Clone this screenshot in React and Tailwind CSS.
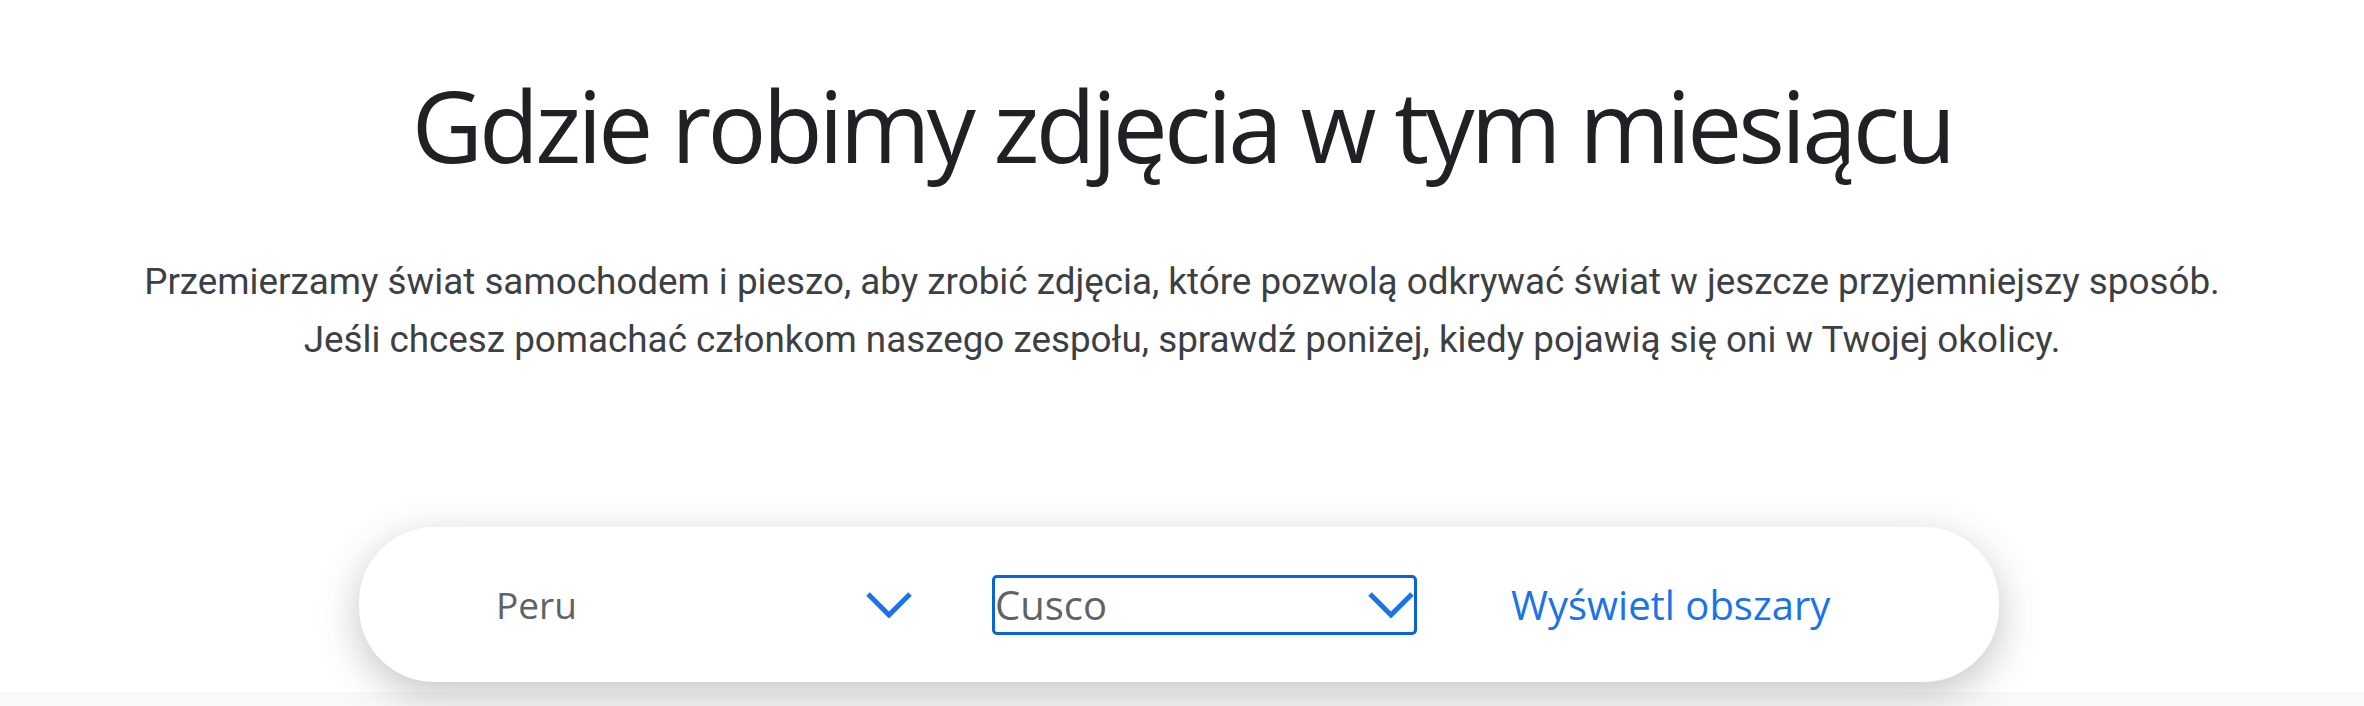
import React from 'react';

function Chevron() {
  return (
    <svg width="46" height="26" viewBox="0 0 46 26" fill="none" className="shrink-0">
      <path d="M2 2 L23 23 L44 2" stroke="#1a73e8" strokeWidth="5" />
    </svg>
  );
}

export default function App() {
  return (
    <div className="min-h-screen bg-white flex flex-col">
      <div className="flex flex-col items-center h-[692px]">
        <h1 className="pt-[76px] text-[98px] leading-none tracking-[-3.8px] font-normal text-[#202124] font-['Open_Sans',sans-serif]">
          Gdzie robimy zdjęcia w tym miesiącu
        </h1>
        <p className="mt-[79px] text-center text-[36.8px] leading-[58px] text-[#3c4043] font-['Roboto',sans-serif]">
          Przemierzamy świat samochodem i pieszo, aby zrobić zdjęcia, które pozwolą odkrywać świat w jeszcze przyjemniejszy sposób.
          <br />
          Jeśli chcesz pomachać członkom naszego zespołu, sprawdź poniżej, kiedy pojawią się oni w Twojej okolicy.
        </p>
        <div className="relative z-10 mt-[158px] -ml-[6px] w-[1640px] h-[155px] shrink-0 rounded-[75px] bg-white shadow-[0_12px_40px_rgba(60,64,67,0.3)] flex items-center pl-[134px] font-['Open_Sans',sans-serif]">
          <div className="w-[422px] h-[59px] flex items-center justify-between border-[3px] border-transparent">
            <span className="text-[37px] text-[#5f6368]">Peru</span>
            <Chevron />
          </div>
          <div className="ml-[77px] w-[425px] h-[60px] flex items-center justify-between border-[3px] border-[#0a63d8] rounded-[5px]">
            <span className="text-[40px] text-[#5f6368]">Cusco</span>
            <Chevron />
          </div>
          <button className="ml-[94px] text-[40px] font-medium text-[#1a73e8]">
            Wyświetl obszary
          </button>
        </div>
      </div>
      <div className="flex-1 bg-[#f8f9fa]"></div>
    </div>
  );
}
